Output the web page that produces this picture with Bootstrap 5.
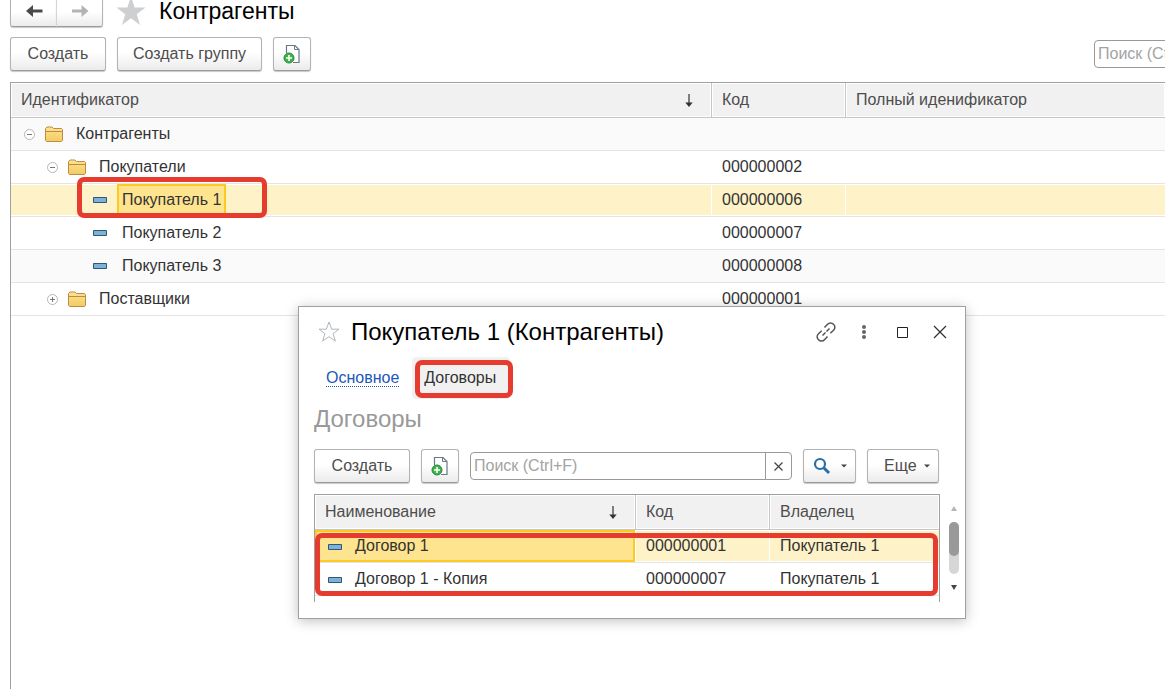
<!DOCTYPE html>
<html lang="ru">
<head>
<meta charset="utf-8">
<meta name="viewport" content="width=device-width, initial-scale=1">
<title>Контрагенты</title>
<link href="https://cdn.jsdelivr.net/npm/bootstrap@5.3.0/dist/css/bootstrap.min.css" rel="stylesheet">
<style>
  body { font: 16px/20px "Liberation Sans", Arial, sans-serif; color: #333; background: #fff; }
  .page { min-height: 100vh; padding-left: 10px; }
  .page-title { font-size: 23px; line-height: 22px; color: #000; font-weight: 400; }
  .dialog-title { font-size: 24px; line-height: 28px; color: #000; font-weight: 400; margin: 0 0 0 10px; }
  .topbar { height: 27px; gap: 13px; }
  .tools { gap: 11px; margin: 10px 0 11px; }

  .btn-app {
    height: 34px; padding: 0 16px; font-size: 16px; line-height: 20px; color: #4d4d4d;
    border: 1px solid #b3b3b3; border-bottom-color: #9a9a9a; border-radius: 3px;
    background: linear-gradient(#fff 45%, #ebebeb); box-shadow: 0 1px 1px #c8c8c8;
  }
  .btn-create { width: 96px; }
  .btn-group-create { width: 145px; padding: 0; }
  .btn-square { width: 38px; padding: 0; }
  .btn-find { width: 53px; padding: 0 8px; }
  .btn-more { width: 72px; padding: 0 8px 0 16px; }
  .btn-history { height: 27px; width: 47px; padding: 0; border-top: 0; border-top-left-radius: 0; border-top-right-radius: 0; }
  .btn-history + .btn-history { border-left-color: #d5d5d5; }
  .btn-plain { padding: 0; border: 0; background: none; line-height: 0; }

  .search-box, .search-box:focus { height: 28px; padding: 0 3px; font-size: 16px; line-height: 20px; border: 1px solid #999; border-radius: 4px; box-shadow: none; }
  .search-box::placeholder { color: #a3a3a3; opacity: 1; }
  .search-cut { width: 71px; }
  .search-cut .search-box { width: 322px; }
  .btn-clear { width: 27px; height: 28px; border: 1px solid #999; border-radius: 0 4px 4px 0; background: #fff; }

  .grid-frame { border-left: 1px solid #a0a0a0; border-top: 1px solid #a0a0a0; }
  .grid { width: 100%; table-layout: fixed; border-collapse: separate; border-spacing: 0; }
  .grid th { height: 35px; padding: 0 10px; font-weight: 400; color: #4d4d4d; background: #f1f1f1; border-bottom: 1px solid #c6c6c6; box-shadow: inset 0 0 0 1px #fff; }
  .grid th + th { border-left: 1px solid #c6c6c6; }
  .grid td { height: 33px; padding: 0 10px; border-bottom: 1px solid #e4e4e4; white-space: nowrap; }
  .grid td + td { padding-left: 11px; }
  .grid .shaded td { background: #fafafa; }
  .grid .chosen td { background: #fef2c8; box-shadow: inset 0 1px #fff, inset 0 -1px #fff; }
  .grid .chosen td + td { box-shadow: inset 0 1px #fff, inset 0 -1px #fff, inset 1px 0 #fff; }
  .col-code { width: 134px; }
  .col-full { width: 320px; }
  .col-owner { width: 170px; }
  .grid .lvl-1 { padding-left: 13px; }
  .grid .lvl-2 { padding-left: 36px; }
  .grid .lvl-3 { padding-left: 82px; }
  .toggle { margin-right: 10px; }
  .folder { margin-right: 13px; }
  .item-name { margin-left: 10px; padding: 0 5px; line-height: 32px; }
  .item-name.current { padding: 3px 3px; line-height: 22px; border: 2px solid #fdca22; background: #fee48f; }

  .dialog { position: absolute; left: 298px; top: 306px; width: 668px; padding: 10px 6px 16px 15px; background: #fff; border: 1px solid #a0a0a0; box-shadow: 0 2px 12px rgba(0,0,0,.25); }
  .dialog-head { height: 30px; padding: 0 9px 0 3px; }
  .dialog-icons { gap: 18px; }
  .tab-row { height: 42px; margin-top: 10px; padding-left: 12px; gap: 13px; }
  .tab-link { color: #2158b8; text-decoration: none; border-bottom: 1px dotted #2158b8; line-height: 17px; }
  .tab-now { height: 42px; width: 98px; padding-left: 12px; background: #f1f1f1; border-radius: 4px; color: #333; text-decoration: none; }
  .section-title { font-size: 24px; line-height: 28px; color: #999; font-weight: 400; margin: 6px 0 16px; }
  .dialog-tools { gap: 11px; padding-right: 20px; }
  .dialog-grid { margin-top: 11px; gap: 9px; }
  .dialog-grid .grid-frame { border-right: 1px solid #a0a0a0; height: 108px; }
  .grid .chosen .cell-now { background: #fee48f; box-shadow: inset 0 0 0 2px #fdca22; }
  .contract { margin-left: 13px; }
  .scroller { width: 10px; height: 86px; margin-top: 11px; }
  .scroll-track { height: 52px; border-radius: 5px; background: #d6d6d6; }
  .scroll-thumb { height: 34px; border-radius: 5px; background: #999; }

  .callout-red { position: absolute; border: 5px solid #e63c30; border-radius: 7px; pointer-events: none; }
  .callout-buyer { left: 66px; top: -7px; width: 190px; height: 41px; }
  .callout-tab { left: 3px; top: 3px; width: 98px; height: 38px; }
  .callout-rows { left: 0; top: 38px; right: 1px; height: 63px; }
</style>
</head>
<body>
<svg width="0" height="0" class="position-absolute" aria-hidden="true">
  <defs>
    <linearGradient id="gold" x1="0" y1="0" x2="0" y2="1"><stop offset="0" stop-color="#ffe391"/><stop offset="1" stop-color="#f2cb62"/></linearGradient>
    <symbol id="i-folder" viewBox="0 0 18 16"><path d="M.5 14.500V2.500L2 1h5l1.500 1.500h8l1 1v11l-1 1h-15z" fill="url(#gold)" stroke="#bd8a48"/><path d="M1 5.500h16" stroke="#bd8a48"/></symbol>
    <symbol id="i-minus" viewBox="0 0 11 11"><circle cx="5.500" cy="5.500" r="5" fill="#fff" stroke="#b5b5b5"/><path d="M3 5.500h5" stroke="#777"/></symbol>
    <symbol id="i-plus" viewBox="0 0 11 11"><circle cx="5.500" cy="5.500" r="5" fill="#fff" stroke="#b5b5b5"/><path d="M3 5.500h5M5.500 3v5" stroke="#777"/></symbol>
    <symbol id="i-item" viewBox="0 0 14 6"><path d="M.5.5h13v5H.5z" fill="#7eb1d6" stroke="#2f5776"/></symbol>
    <symbol id="i-sort" viewBox="0 0 8 13"><path d="M4 0v11" stroke="#333" stroke-width="1.200"/><path d="M.3 8.500h7.400L4 13z" fill="#333"/></symbol>
    <symbol id="i-copy" viewBox="0 0 18 20"><path d="M3.500 9V1.500h8.500l4 4V18.500H10" fill="#fff" stroke="#66788a" stroke-width="1.200"/><path d="M11.500 1.500v4h4" fill="none" stroke="#66788a"/><circle cx="6" cy="14" r="5" fill="#3fb24f" stroke="#248c35"/><path d="M3 14h6M6 11v6" stroke="#fff" stroke-width="1.600"/></symbol>
    <symbol id="i-caret" viewBox="0 0 6 4"><path d="M0 .5h6L3 3.500z" fill="#444"/></symbol>
  </defs>
</svg>

<div class="page d-flex flex-column position-relative overflow-hidden">
  <header class="topbar d-flex align-items-start">
    <div class="btn-group" role="group" aria-label="История">
      <button type="button" class="btn btn-app btn-history" aria-label="Назад"><svg class="d-block mx-auto mb-1" width="18" height="14" viewBox="0 0 18 14"><path d="M1 7l7-6v4.500h9.500v3H8V13z" fill="#4a4a4a"/></svg></button>
      <button type="button" class="btn btn-app btn-history" aria-label="Вперед"><svg class="d-block mx-auto mb-1" width="18" height="14" viewBox="0 0 18 14"><path d="M17.500 7l-7-6v4.500H1v3h9.500V13z" fill="#b3b3b3"/></svg></button>
    </div>
    <svg width="30" height="26" viewBox="0 0 30 26"><path d="M15-4l3.600 11.600H29.500L20.700 14.200 24 25l-9-6.800L6 25l3.300-10.800L.5 7.600h10.900z" fill="#cdcfd1"/></svg>
    <h1 class="page-title mb-0">Контрагенты</h1>
  </header>

  <div class="tools d-flex align-items-center">
    <button type="button" class="btn btn-app btn-create">Создать</button>
    <button type="button" class="btn btn-app btn-group-create">Создать группу</button>
    <button type="button" class="btn btn-app btn-square" aria-label="Создать копированием"><svg width="18" height="20"><use href="#i-copy"/></svg></button>
    <div class="search-cut ms-auto overflow-hidden"><input class="form-control search-box" type="search" placeholder="Поиск (Ctrl+F)" aria-label="Поиск контрагентов"></div>
  </div>

  <main class="grid-frame flex-grow-1">
    <table class="grid">
      <colgroup><col><col class="col-code"><col class="col-full"></colgroup>
      <thead><tr>
        <th scope="col"><div class="d-flex align-items-center justify-content-between pe-2">Идентификатор<svg width="8" height="13"><use href="#i-sort"/></svg></div></th>
        <th scope="col">Код</th><th scope="col">Полный иденификатор</th>
      </tr></thead>
      <tbody>
        <tr class="shaded"><td class="lvl-1"><div class="d-flex align-items-center"><svg class="toggle" width="11" height="11"><use href="#i-minus"/></svg><svg class="folder" width="18" height="16"><use href="#i-folder"/></svg>Контрагенты</div></td><td></td><td></td></tr>
        <tr><td class="lvl-2"><div class="d-flex align-items-center"><svg class="toggle" width="11" height="11"><use href="#i-minus"/></svg><svg class="folder" width="18" height="16"><use href="#i-folder"/></svg>Покупатели</div></td><td>000000002</td><td></td></tr>
        <tr class="chosen"><td class="lvl-3 position-relative"><div class="d-flex align-items-center"><svg width="14" height="6"><use href="#i-item"/></svg><span class="item-name current">Покупатель 1</span></div><div class="callout-red callout-buyer"></div></td><td>000000006</td><td></td></tr>
        <tr><td class="lvl-3"><div class="d-flex align-items-center"><svg width="14" height="6"><use href="#i-item"/></svg><span class="item-name">Покупатель 2</span></div></td><td>000000007</td><td></td></tr>
        <tr class="shaded"><td class="lvl-3"><div class="d-flex align-items-center"><svg width="14" height="6"><use href="#i-item"/></svg><span class="item-name">Покупатель 3</span></div></td><td>000000008</td><td></td></tr>
        <tr><td class="lvl-2"><div class="d-flex align-items-center"><svg class="toggle" width="11" height="11"><use href="#i-plus"/></svg><svg class="folder" width="18" height="16"><use href="#i-folder"/></svg>Поставщики</div></td><td>000000001</td><td></td></tr>
      </tbody>
    </table>
  </main>

  <section class="dialog" role="dialog" aria-labelledby="dialog-title">
    <div class="dialog-head d-flex align-items-center">
      <svg width="24" height="24" viewBox="0 0 24 24"><path d="M12 2l2.700 7.200H22l-5.900 4.500 2.200 7.300L12 16.700 5.700 21l2.200-7.300L2 9.200h7.300z" fill="none" stroke="#b0b5ba"/></svg>
      <h2 class="dialog-title" id="dialog-title">Покупатель 1 (Контрагенты)</h2>
      <div class="dialog-icons d-flex align-items-center ms-auto">
        <button type="button" class="btn-plain" aria-label="Ссылка"><svg width="20" height="20" viewBox="0 0 20 20" fill="none" stroke="#555" stroke-width="1.500"><path d="M8.500 5.500L11.500 2.300a4 4 0 0 1 6 0 4 4 0 0 1 0 6L14.300 11.300M11.500 14.500L8.500 17.700a4 4 0 0 1-6 0 4 4 0 0 1 0-6L5.700 8.700M6.500 13.500L9.500 10.500M10.500 9.500L13.500 6.500"/></svg></button>
        <button type="button" class="btn-plain" aria-label="Меню"><svg width="20" height="20" viewBox="0 0 20 20" fill="#666"><circle cx="10" cy="5" r="2"/><circle cx="10" cy="10" r="2"/><circle cx="10" cy="15" r="2"/></svg></button>
        <button type="button" class="btn-plain" aria-label="Развернуть"><svg width="20" height="20" viewBox="0 0 20 20"><path d="M5.500 5.500h10v10h-10z" fill="none" stroke="#222"/></svg></button>
        <button type="button" class="btn-plain" aria-label="Закрыть"><svg width="20" height="20" viewBox="0 0 20 20"><path d="M4 4l12 12M16 4L4 16" stroke="#333" stroke-width="1.300"/></svg></button>
      </div>
    </div>

    <nav class="tab-row d-flex align-items-center" aria-label="Разделы">
      <a class="tab-link" href="#">Основное</a>
      <a class="tab-now d-flex align-items-center position-relative" href="#" aria-current="page">Договоры<span class="callout-red callout-tab"></span></a>
    </nav>
    <h3 class="section-title">Договоры</h3>

    <div class="dialog-tools d-flex align-items-center">
      <button type="button" class="btn btn-app btn-create">Создать</button>
      <button type="button" class="btn btn-app btn-square" aria-label="Создать копированием"><svg width="18" height="20"><use href="#i-copy"/></svg></button>
      <div class="input-group flex-grow-1 w-auto">
        <input class="form-control search-box" type="search" placeholder="Поиск (Ctrl+F)" aria-label="Поиск договоров">
        <button type="button" class="btn-clear p-0" aria-label="Очистить"><svg class="d-block mx-auto" width="9" height="9" viewBox="0 0 9 9"><path d="M.5.5l8 8M8.500.5l-8 8" stroke="#444" stroke-width="1.200"/></svg></button>
      </div>
      <button type="button" class="btn btn-app btn-find d-flex align-items-center justify-content-between" aria-label="Найти"><svg width="20" height="18" viewBox="0 0 20 18" fill="none" stroke="#266fa8"><circle cx="8" cy="7" r="5" stroke-width="2.200"/><path d="M11.500 10.500L17 16" stroke-width="3"/></svg><svg width="6" height="4"><use href="#i-caret"/></svg></button>
      <button type="button" class="btn btn-app btn-more d-flex align-items-center justify-content-between">Еще<svg width="6" height="4"><use href="#i-caret"/></svg></button>
    </div>

    <div class="dialog-grid d-flex">
      <div class="grid-frame flex-grow-1 position-relative">
        <table class="grid">
          <colgroup><col><col class="col-code"><col class="col-owner"></colgroup>
          <thead><tr>
            <th scope="col"><div class="d-flex align-items-center justify-content-between pe-2">Наименование<svg width="8" height="13"><use href="#i-sort"/></svg></div></th>
            <th scope="col">Код</th><th scope="col">Владелец</th>
          </tr></thead>
          <tbody>
            <tr class="chosen"><td class="lvl-1 cell-now"><svg width="14" height="6" class="align-middle"><use href="#i-item"/></svg><span class="contract">Договор 1</span></td><td>000000001</td><td>Покупатель 1</td></tr>
            <tr><td class="lvl-1"><svg width="14" height="6" class="align-middle"><use href="#i-item"/></svg><span class="contract">Договор 1 - Копия</span></td><td>000000007</td><td>Покупатель 1</td></tr>
          </tbody>
        </table>
        <div class="callout-red callout-rows"></div>
      </div>
      <div class="scroller d-flex flex-column justify-content-between flex-shrink-0">
        <svg class="mx-auto" width="6" height="6" viewBox="0 0 6 6"><path d="M0 6h6L3 1z" fill="#b5b5b5"/></svg>
        <div class="scroll-track"><div class="scroll-thumb"></div></div>
        <svg class="mx-auto" width="6" height="6" viewBox="0 0 6 6"><path d="M0 0h6L3 5z" fill="#444"/></svg>
      </div>
    </div>
  </section>
</div>
<script src="https://cdn.jsdelivr.net/npm/bootstrap@5.3.0/dist/js/bootstrap.bundle.min.js"></script>
</body>
</html>
